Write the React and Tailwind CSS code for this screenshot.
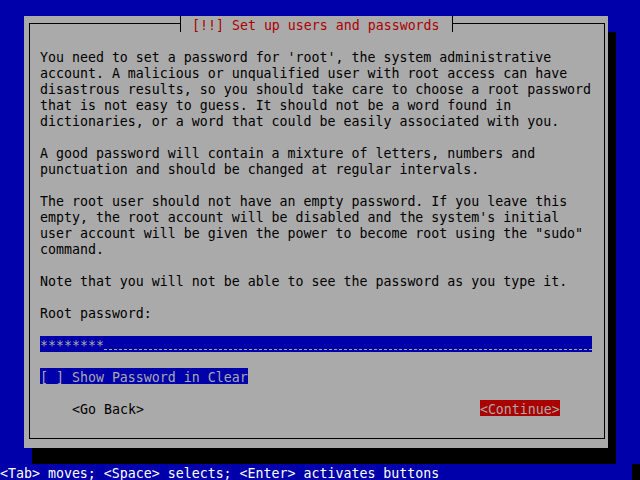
import React from 'react';

const paragraphs = [
    [
        "You need to set a password for 'root', the system administrative",
        'account. A malicious or unqualified user with root access can have',
        'disastrous results, so you should take care to choose a root password',
        'that is not easy to guess. It should not be a word found in',
        'dictionaries, or a word that could be easily associated with you.',
    ],
    [
        'A good password will contain a mixture of letters, numbers and',
        'punctuation and should be changed at regular intervals.',
    ],
    [
        'The root user should not have an empty password. If you leave this',
        "empty, the root account will be disabled and the system's initial",
        'user account will be given the power to become root using the "sudo"',
        'command.',
    ],
    ['Note that you will not be able to see the password as you type it.'],
    ['Root password:'],
];

function Line({ children, className = '' }) {
    return <div className={`h-[16px] leading-[20px] whitespace-pre ${className}`}>{children}</div>;
}

function Tee({ side }) {
    return (
        <div className="relative w-[8px] h-[16px]">
            <div className={`absolute top-[7px] h-px w-[5px] bg-black ${side === 'left' ? 'left-0' : 'left-[4px]'}`} />
            <div className="absolute left-[4px] top-0 w-px h-[16px] bg-black" />
        </div>
    );
}

export default function App() {
    return (
        <div
            className="w-[640px] h-[480px] bg-[#0000aa] flex flex-col overflow-hidden text-[13.28px]"
            style={{ fontFamily: '"DejaVu Sans Mono", "Liberation Mono", monospace' }}
        >
            <div className="h-[16px]" />
            <div className="relative ml-[24px] w-[584px] h-[432px] bg-[#aaaaaa] shadow-[8px_16px_0_#000] pt-[7px] pl-[5px]">
                <div className="w-[576px] h-[416px] border border-black pl-[10px] pt-[24px] text-black">
                    {paragraphs.map((para, i) => (
                        <div key={i} className="mb-[16px]">
                            {para.map((l, j) => (
                                <Line key={j}>{l}</Line>
                            ))}
                        </div>
                    ))}
                    <div className="flex w-[552px] h-[16px] bg-[#0000aa] text-[#aaaaaa]">
                        <Line>********</Line>
                        <div className="mt-[13px] w-[488px] h-px border-b border-dashed border-[#aaaaaa]" />
                    </div>
                    <div className="h-[16px]" />
                    <Line className="w-fit bg-[#0000aa] text-[#aaaaaa]">[ ] Show Password in Clear</Line>
                    <div className="h-[16px]" />
                    <div className="flex h-[16px]">
                        <Line className="ml-[32px]">{'<Go Back>'}</Line>
                        <Line className="ml-[336px] bg-[#aa0000] text-[#aaaaaa]">{'<Continue>'}</Line>
                    </div>
                </div>
                <div className="absolute left-[152px] top-0 flex h-[16px] bg-[#aaaaaa]">
                    <Tee side="left" />
                    <Line className="px-[8px] text-[#aa0000]">[!!] Set up users and passwords</Line>
                    <Tee side="right" />
                </div>
            </div>
            <div className="h-[16px]" />
            <div className="flex h-[16px]">
                <Line className="w-[632px] text-white">
                    {'<Tab> moves; <Space> selects; <Enter> activates buttons'}
                </Line>
                <div className="w-[8px] h-[16px] bg-black" />
            </div>
        </div>
    );
}
